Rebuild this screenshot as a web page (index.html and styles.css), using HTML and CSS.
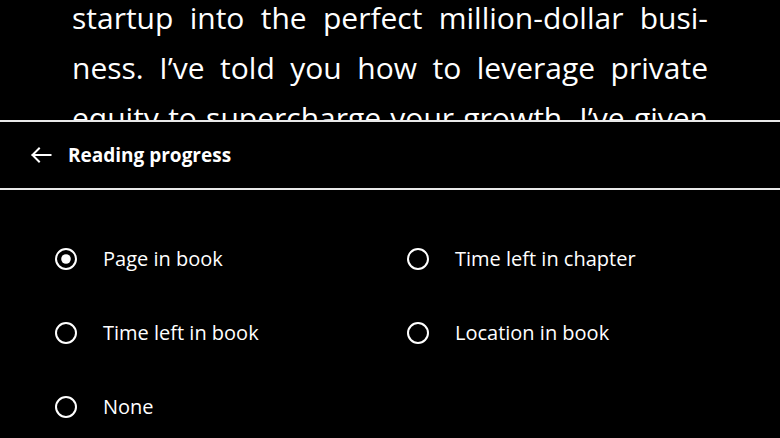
FILE: index.html
```html
<!DOCTYPE html>
<html lang="en">
<head>
<meta charset="utf-8">
<title>Reading progress</title>
<link rel="stylesheet" href="styles.css">
</head>
<body>
<div class="reader">
  <p class="reader-text">
    <span class="line">startup into the perfect million-dollar busi-</span>
    <span class="line">ness. I’ve told you how to leverage private</span>
    <span class="line">equity to supercharge your growth. I’ve given</span>
  </p>
</div>
<section class="panel">
  <header class="panel-header">
    <svg class="back-icon" width="22" height="16" viewBox="0 0 22 16" aria-hidden="true">
      <path d="M20.5 8H2.5M9 1.5L2.5 8L9 14.5" fill="none" stroke="#fff" stroke-width="2" stroke-linecap="square" stroke-linejoin="miter"/>
    </svg>
    <h1 class="panel-title">Reading progress</h1>
  </header>
  <div class="options">
    <label class="option">
      <svg class="radio" width="24" height="24" viewBox="0 0 24 24" aria-hidden="true">
        <circle cx="12" cy="12" r="10" fill="none" stroke="#fff" stroke-width="2"/>
        <circle cx="12" cy="12" r="4.8" fill="#fff"/>
      </svg>
      <span class="option-label">Page in book</span>
    </label>
    <label class="option">
      <svg class="radio" width="24" height="24" viewBox="0 0 24 24" aria-hidden="true">
        <circle cx="12" cy="12" r="10" fill="none" stroke="#fff" stroke-width="2"/>
      </svg>
      <span class="option-label">Time left in chapter</span>
    </label>
    <label class="option">
      <svg class="radio" width="24" height="24" viewBox="0 0 24 24" aria-hidden="true">
        <circle cx="12" cy="12" r="10" fill="none" stroke="#fff" stroke-width="2"/>
      </svg>
      <span class="option-label">Time left in book</span>
    </label>
    <label class="option">
      <svg class="radio" width="24" height="24" viewBox="0 0 24 24" aria-hidden="true">
        <circle cx="12" cy="12" r="10" fill="none" stroke="#fff" stroke-width="2"/>
      </svg>
      <span class="option-label">Location in book</span>
    </label>
    <label class="option">
      <svg class="radio" width="24" height="24" viewBox="0 0 24 24" aria-hidden="true">
        <circle cx="12" cy="12" r="10" fill="none" stroke="#fff" stroke-width="2"/>
      </svg>
      <span class="option-label">None</span>
    </label>
  </div>
</section>
</body>
</html>
```
FILE: styles.css
```css
html, body {
  margin: 0;
  padding: 0;
  background: #000;
  color: #fff;
  font-family: "Open Sans", "Noto Sans", sans-serif;
}

body {
  width: 780px;
  height: 438px;
  overflow: hidden;
}

.reader {
  height: 120px;
  overflow: hidden;
  padding: 0 72px;
}

.reader-text {
  margin: 0;
  font-size: 30px;
  line-height: 36px;
  color: #fff;
}

.reader-text .line {
  display: block;
  margin-bottom: 14px;
  text-align: justify;
  text-align-last: justify;
  white-space: nowrap;
}

.panel {
  border-top: 2px solid #e8e8e8;
  background: #000;
}

.panel-header {
  height: 66px;
  display: flex;
  align-items: center;
  gap: 16px;
  padding-left: 30px;
  border-bottom: 2px solid #e8e8e8;
}

.back-icon {
  display: block;
  flex: none;
}

.panel-title {
  margin: 0;
  font-size: 19px;
  font-weight: 700;
  line-height: 1;
}

.options {
  display: grid;
  grid-template-columns: 352px 1fr;
  grid-auto-rows: 74px;
  padding: 32px 0 0 54px;
}

.option {
  display: flex;
  align-items: center;
  gap: 25px;
}

.radio {
  display: block;
  flex: none;
}

.option-label {
  font-size: 20px;
  line-height: 1;
}
```
